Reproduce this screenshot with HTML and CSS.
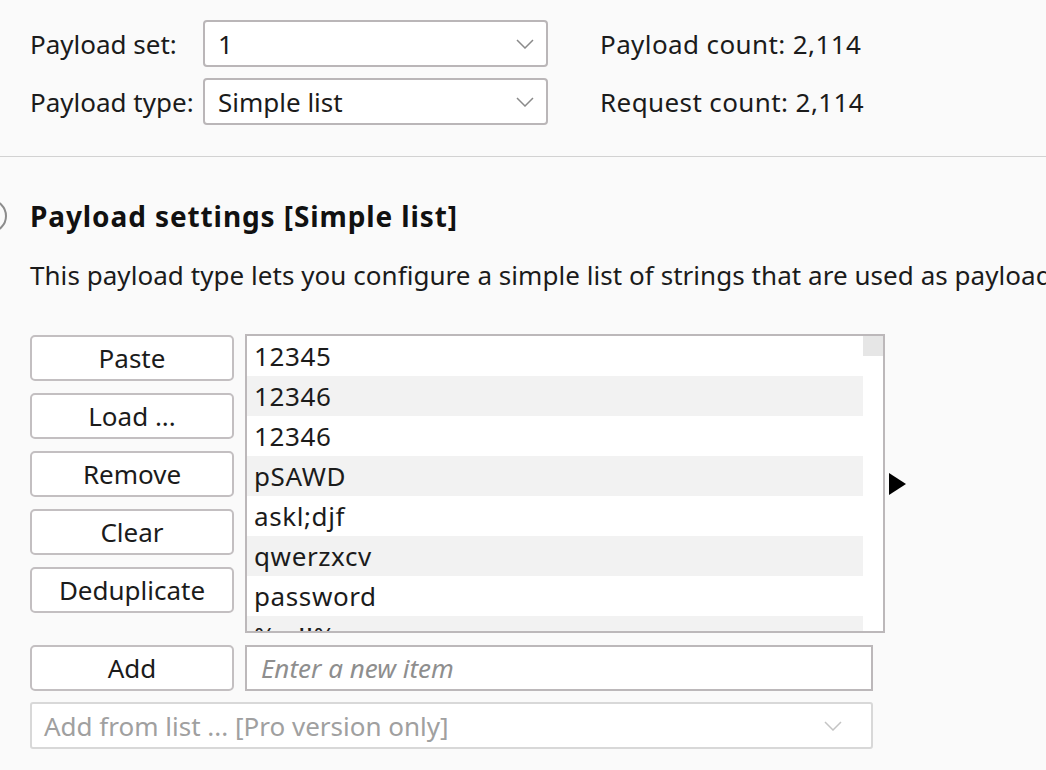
FILE: index.html
```html
<!DOCTYPE html>
<html>
<head>
<meta charset="utf-8">
<link rel="stylesheet" href="styles.css">
</head>
<body>
<div class="page">
  <section class="top">
    <div class="label">Payload set:</div>
    <div class="select"><span>1</span><svg class="chev" width="18" height="10" viewBox="0 0 18 10"><path d="M1 1 L9 9 L17 1" fill="none" stroke="#8a8a8a" stroke-width="1.5"/></svg></div>
    <div class="count">Payload count: 2,114</div>
    <div class="label">Payload type:</div>
    <div class="select"><span>Simple list</span><svg class="chev" width="18" height="10" viewBox="0 0 18 10"><path d="M1 1 L9 9 L17 1" fill="none" stroke="#8a8a8a" stroke-width="1.5"/></svg></div>
    <div class="count">Request count: 2,114</div>
  </section>

  <section class="settings">
    <div class="heading-row">
      <span class="help-circle"></span>
      <h2 class="heading">Payload settings [Simple list]</h2>
    </div>
    <p class="desc">This payload type lets you configure a simple list of strings that are used as payloads.</p>

    <div class="editor">
      <div class="buttons">
        <button class="btn">Paste</button>
        <button class="btn">Load ...</button>
        <button class="btn">Remove</button>
        <button class="btn">Clear</button>
        <button class="btn">Deduplicate</button>
      </div>
      <div class="listbox">
        <ul class="items">
          <li>12345</li>
          <li>12346</li>
          <li>12346</li>
          <li>pSAWD</li>
          <li>askl;djf</li>
          <li>qwerzxcv</li>
          <li>password</li>
          <li>%   !!%</li>
        </ul>
        <div class="scrollbar"><div class="thumb"></div></div>
      </div>
      <svg class="splitter" width="17" height="22" viewBox="0 0 17 22"><path d="M0 0 L17 11 L0 22 Z" fill="#000"/></svg>

      <button class="btn">Add</button>
      <div class="newitem">Enter a new item</div>
    </div>

    <div class="fromlist"><span>Add from list ... [Pro version only]</span><svg class="chev" width="18" height="10" viewBox="0 0 18 10"><path d="M1 1 L9 9 L17 1" fill="none" stroke="#c4c4c4" stroke-width="1.5"/></svg></div>
  </section>
</div>
</body>
</html>
```

FILE: styles.css
```css
html, body {
  margin: 0;
  padding: 0;
}
body {
  background: #fafafa;
  font-family: "Noto Sans", "Open Sans", sans-serif;
  font-size: 26px;
  color: #1b1b1b;
  width: 1046px;
  height: 770px;
  overflow: hidden;
}
.page {
  width: 1046px;
}
.top {
  display: grid;
  grid-template-columns: 173px 345px auto;
  row-gap: 11px;
  padding: 20px 0 31px 30px;
  border-bottom: 1px solid #d2d2d2;
  align-items: center;
}
.label, .count {
  line-height: 36px;
  white-space: nowrap;
}
.count {
  padding-left: 52px;
  letter-spacing: 0.4px;
}
.select {
  box-sizing: border-box;
  height: 47px;
  border: 2px solid #bab6b8;
  border-radius: 4px;
  background: #fff;
  display: flex;
  align-items: center;
  justify-content: space-between;
  padding: 0 12px 0 13px;
}
.settings {
  padding-left: 30px;
}
.heading-row {
  display: flex;
  align-items: center;
  gap: 23px;
  margin-top: 41px;
  margin-left: -30px;
}
.help-circle {
  box-sizing: border-box;
  width: 34px;
  height: 34px;
  margin-left: -27px;
  border: 2px solid #8c8c8c;
  border-radius: 50%;
  flex: none;
}
.heading {
  margin: 0;
  font-size: 28px;
  font-weight: bold;
  letter-spacing: 0.9px;
  line-height: 36px;
  color: #111;
  white-space: nowrap;
}
.desc {
  margin: 23px 0 0 0;
  line-height: 36px;
  white-space: nowrap;
  letter-spacing: 0.05px;
}
.editor {
  display: grid;
  grid-template-columns: 204px 640px auto;
  column-gap: 11px;
  row-gap: 12px;
  margin-top: 41px;
  align-items: start;
}
.buttons {
  display: flex;
  flex-direction: column;
  gap: 12px;
  padding-top: 1px;
}
.btn {
  box-sizing: border-box;
  width: 204px;
  height: 46px;
  border: 2px solid #c3bfc1;
  border-radius: 5px;
  background: #fff;
  font-family: inherit;
  font-size: 26px;
  color: #1b1b1b;
  padding: 0;
  line-height: 1;
}
.listbox {
  box-sizing: border-box;
  height: 299px;
  border: 2px solid #bcb8ba;
  background: #fff;
  display: flex;
  overflow: hidden;
}
.items {
  list-style: none;
  margin: 0;
  padding: 0;
  flex: 1;
  overflow: hidden;
}
.items li {
  height: 40px;
  line-height: 40px;
  padding-left: 7px;
  white-space: pre;
  letter-spacing: 0.6px;
}
.items li:nth-child(even) {
  background: #f2f2f2;
}
.scrollbar {
  width: 20px;
  flex: none;
  background: #fff;
}
.thumb {
  height: 20px;
  background: #e6e6e6;
}
.splitter {
  align-self: center;
  margin-left: -7px;
}
.newitem {
  box-sizing: border-box;
  width: 628px;
  height: 46px;
  border: 2px solid #bcb8ba;
  background: #fff;
  font-style: italic;
  color: #8e8e8e;
  padding-left: 14px;
  line-height: 42px;
}
.fromlist {
  box-sizing: border-box;
  width: 843px;
  height: 47px;
  margin-top: 11px;
  border: 2px solid #d8d8d8;
  border-radius: 3px;
  background: #fff;
  display: flex;
  align-items: center;
  justify-content: space-between;
  padding: 0 29px 0 12px;
  color: #a0a0a0;
}
```
